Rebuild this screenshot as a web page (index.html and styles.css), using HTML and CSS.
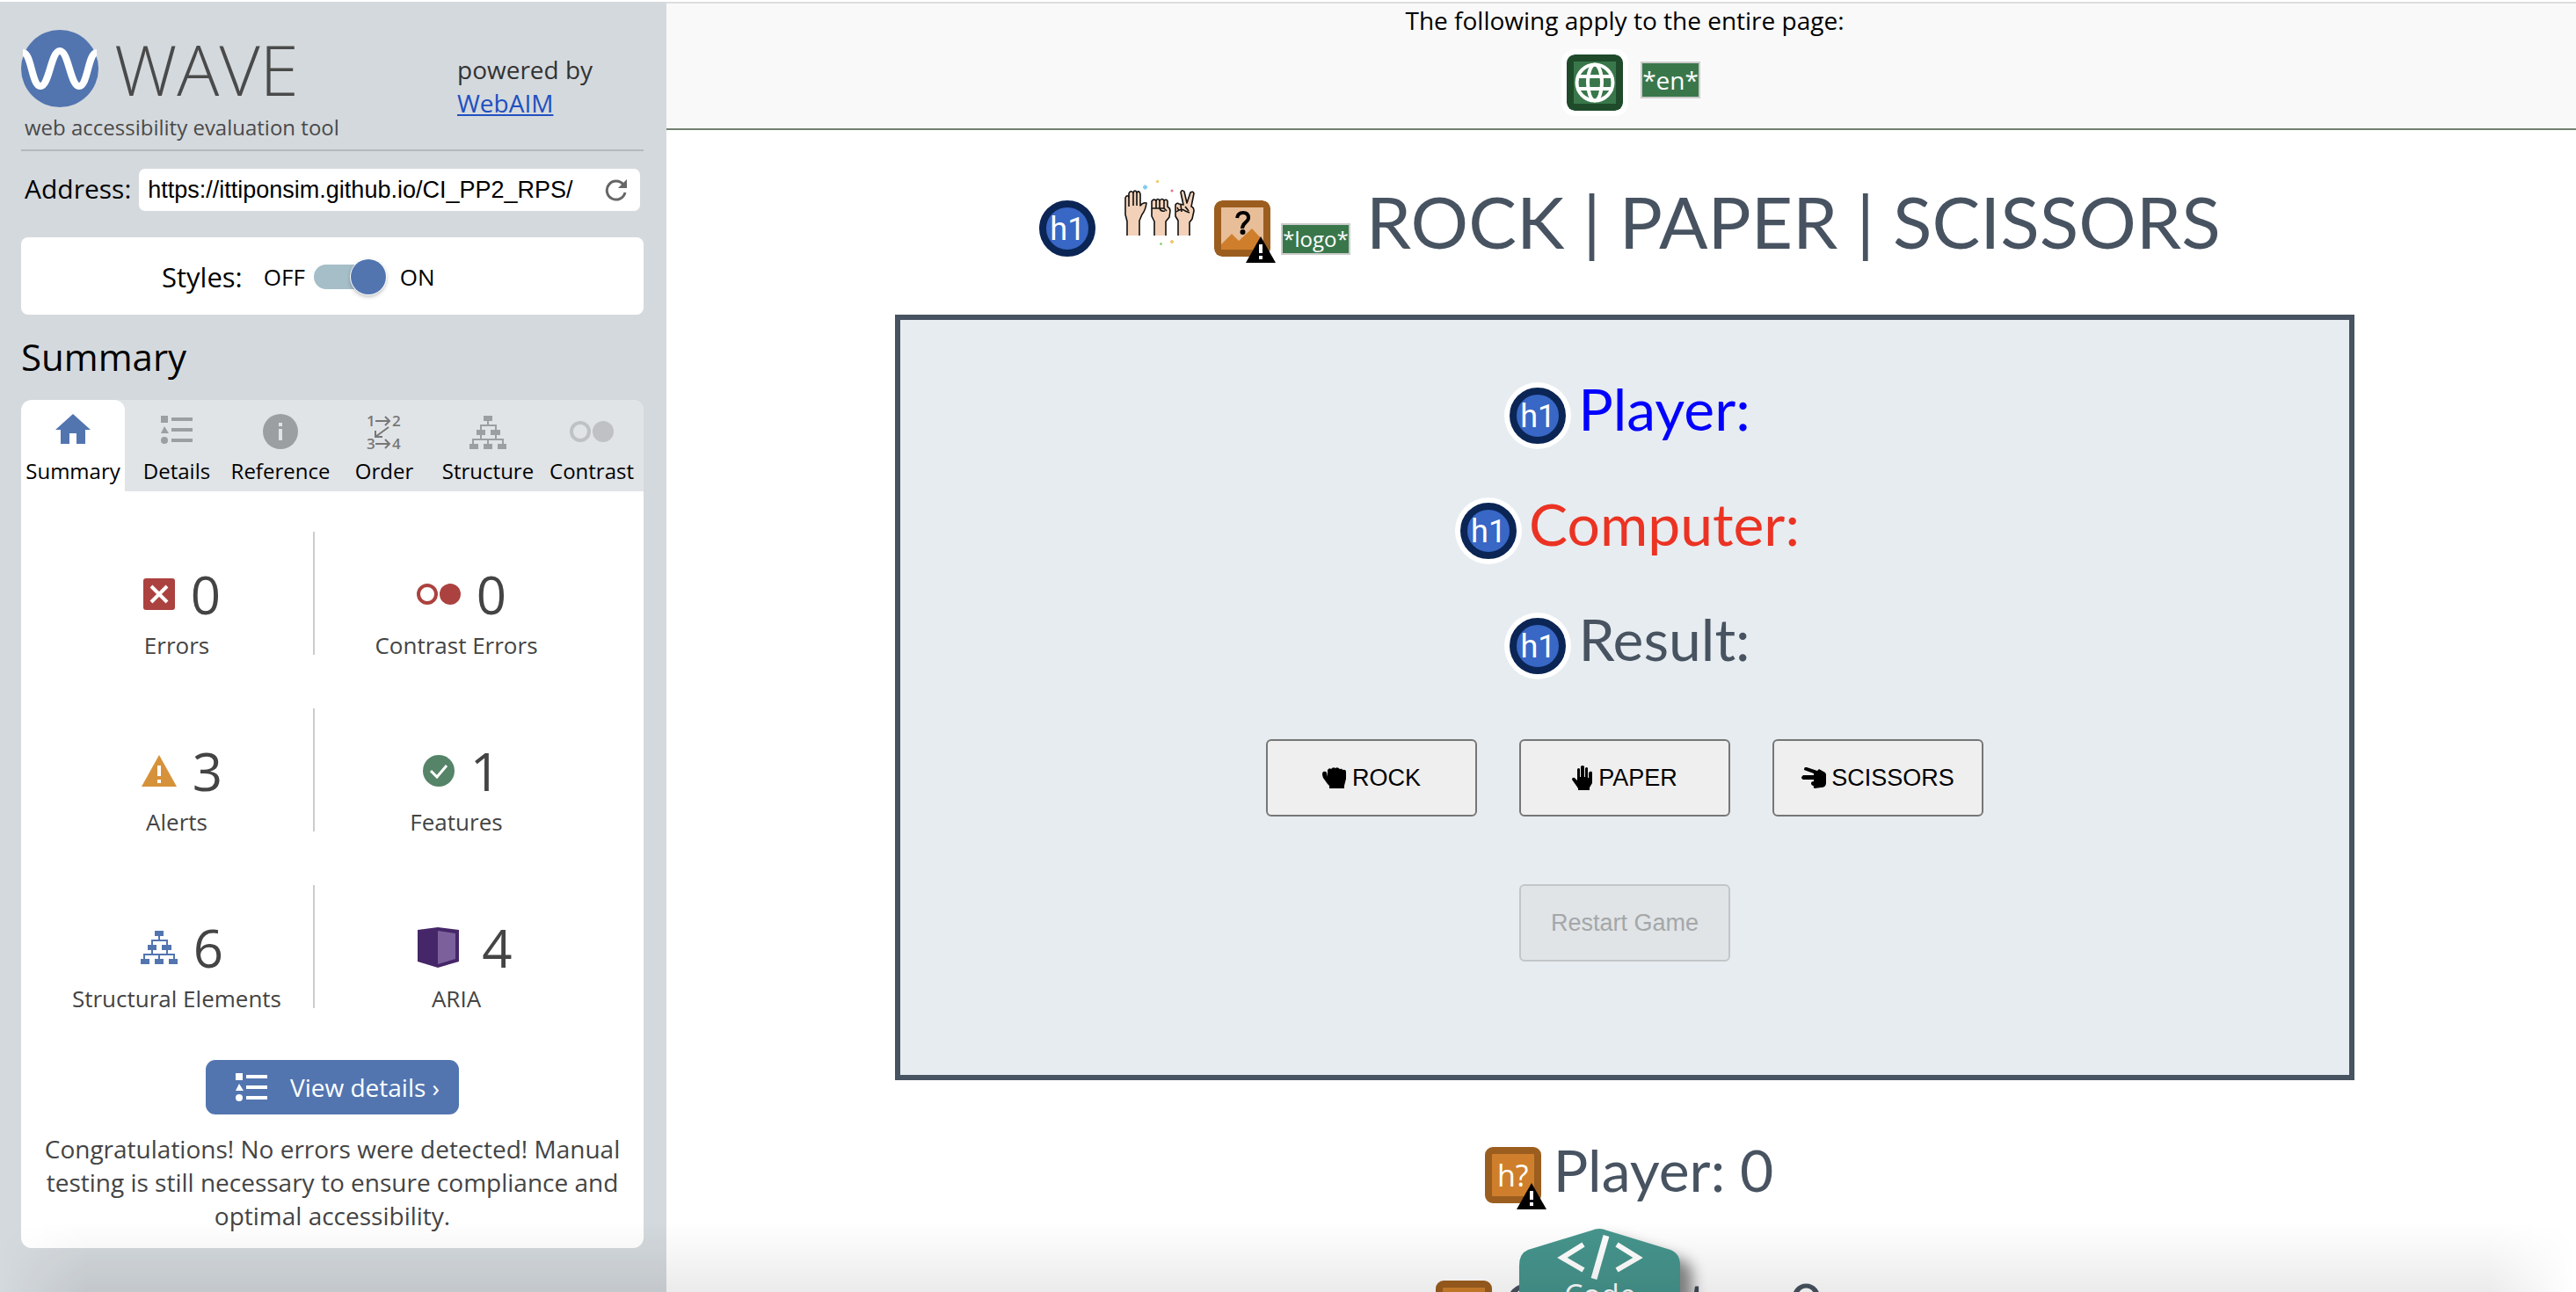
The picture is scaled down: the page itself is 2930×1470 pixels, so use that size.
FILE: index.html
```html
<!DOCTYPE html>
<html lang="en">
<head>
<meta charset="utf-8">
<title>WAVE Web Accessibility Evaluation Tool</title>
<link rel="stylesheet" href="styles.css">
</head>
<body>
<svg class="defs" width="0" height="0" aria-hidden="true">
  <symbol id="tree" viewBox="0 0 42 38">
    <path d="M16 0h10v6h-4v4h9v6h4v6h-4v4h8v6h3v6H32v-6h5v-4H22v4h4v6H16v-6h4v-4H5v4h5v6H0v-6h3v-6h9v-4H8v-6h4v-6h8V6h-4zM14 12v4h4v6h-4v4h15v-4h-5v-6h5v-4z" fill="currentColor" fill-rule="evenodd"/>
  </symbol>
  <symbol id="list" viewBox="0 0 36 32">
    <path d="M0 0h8v8H0zM12 2h24v4H12zM4 12l5 8h-9zM12 14h24v4H12zM12 26h24v4H12z" fill="currentColor"/>
    <circle cx="4" cy="28" r="4" fill="currentColor"/>
  </symbol>
  <symbol id="rings" viewBox="0 0 50 24">
    <circle cx="12" cy="12" r="10" fill="none" stroke="currentColor" stroke-width="4"/>
    <circle cx="38" cy="12" r="12" fill="currentColor"/>
  </symbol>
  <symbol id="warn" viewBox="0 0 34 30">
    <path d="M17 0l17 30H0z" fill="#000"/>
    <path d="M15 9h4v10h-4zM15 22h4v4h-4z" fill="#fff"/>
  </symbol>
</svg>
<div class="app">
  <aside class="sidebar">
    <header class="brand">
      <div class="logo">
        <div class="logo-row">
          <svg width="88" height="88" viewBox="0 0 88 88" aria-hidden="true">
            <circle cx="44" cy="44" r="44" fill="#5275b0"/>
            <path d="M2 26C12 26 12 64 22 64S34 24 44 24S56 64 66 64S76 26 86 26" fill="none" stroke="#fff" stroke-width="8"/>
          </svg>
          <span class="wordmark">WAVE</span>
        </div>
        <span class="tagline">web accessibility evaluation tool</span>
      </div>
      <p class="powered">powered by<br><a href="#">WebAIM</a></p>
    </header>
    <form class="address">
      <label for="url">Address:</label>
      <div class="url-box">
        <input id="url" type="text" value="https://ittiponsim.github.io/CI_PP2_RPS/">
        <button type="button" class="reload" aria-label="Reload">
          <svg width="26" height="26" viewBox="0 0 26 26"><path d="M21 7A10.500 10.500 0 1 0 23 16" fill="none" stroke="#666" stroke-width="3"/><path d="M25 1v10H15z" fill="#666"/></svg>
        </button>
      </div>
    </form>
    <div class="styles-card">
      <label class="styles-label" for="styles">Styles:</label>
      <span>OFF</span>
      <input id="styles" class="switch" type="checkbox" checked>
      <span>ON</span>
    </div>
    <h2>Summary</h2>
    <section class="panel">
      <nav class="tabs">
        <button class="tab active"><svg class="home" width="40" height="34" viewBox="0 0 40 34"><path d="M20 0l20 18h-6v16H24V22h-8v12H6V18H0z" fill="currentColor"/></svg>Summary</button>
        <button class="tab"><svg width="36" height="38" viewBox="0 0 36 38"><use href="#list" width="36" height="32"/></svg>Details</button>
        <button class="tab"><svg width="40" height="40" viewBox="0 0 40 40"><circle cx="20" cy="20" r="20" fill="currentColor"/><path d="M18 10h4v4h-4zM18 17h4v13h-4z" fill="#e0e4e7"/></svg>Reference</button>
        <button class="tab order"><svg width="38" height="38" viewBox="0 0 38 38"><g class="digits" fill="currentColor"><text x="-1" y="12">1</text><text x="28" y="12">2</text><text x="-1" y="38">3</text><text x="28" y="38">4</text></g><path d="M9 6h16M20 1l5 5-5 5M9 32h16M20 27l5 5-5 5M24 13L9 24M9 17v7h8" fill="none" stroke="currentColor" stroke-width="2"/></svg>Order</button>
        <button class="tab"><svg width="42" height="38"><use href="#tree"/></svg>Structure</button>
        <button class="tab contrast"><svg width="50" height="40"><use href="#rings" y="8" width="50" height="24"/></svg>Contrast</button>
      </nav>
      <ul class="stats">
        <li><div class="stat"><svg class="error" width="36" height="36" viewBox="0 0 36 36"><rect width="36" height="36" rx="3" fill="#ab423f"/><path d="M9 9l18 18M27 9L9 27" stroke="#fff" stroke-width="4"/></svg><b>0</b></div><span>Errors</span></li>
        <li><div class="stat rings"><svg width="50" height="24"><use href="#rings"/></svg><b>0</b></div><span>Contrast Errors</span></li>
        <li><div class="stat"><svg width="40" height="36" viewBox="0 0 40 36"><path d="M20 0l20 36H0z" fill="#d6923a"/><path d="M18 12h4v12h-4zM18 28h4v4h-4z" fill="#fff"/></svg><b>3</b></div><span>Alerts</span></li>
        <li><div class="stat"><svg width="36" height="36" viewBox="0 0 36 36"><circle cx="18" cy="18" r="18" fill="#558468"/><path d="M9 18l7 7 11-13" fill="none" stroke="#fff" stroke-width="3"/></svg><b>1</b></div><span>Features</span></li>
        <li><div class="stat tree"><svg width="42" height="38"><use href="#tree"/></svg><b>6</b></div><span>Structural Elements</span></li>
        <li><div class="stat aria"><svg width="47" height="46" viewBox="0 0 47 46"><path d="M23 0l24 3v36L23 46 0 39V3z" fill="#452668"/><path d="M23 4l20 3v29l-20 6z" fill="#7c609c"/></svg><b>4</b></div><span>ARIA</span></li>
      </ul>
      <div class="panel-foot">
        <button class="details"><svg width="36" height="32"><use href="#list"/></svg>View details ›</button>
        <p>Congratulations! No errors were detected! Manual testing is still necessary to ensure compliance and optimal accessibility.</p>
      </div>
    </section>
  </aside>
  <main class="page">
    <header class="page-info">
      <p>The following apply to the entire page:</p>
      <div class="page-icons">
        <svg class="badge square" width="64" height="64" viewBox="0 0 64 64" role="img" aria-label="Language"><rect width="64" height="64" rx="9" fill="#1f4b2b"/><rect x="8" y="8" width="48" height="48" fill="#39774b"/><g fill="none" stroke="#fff" stroke-width="4"><circle cx="32" cy="32" r="20.500"/><ellipse cx="32" cy="32" rx="8" ry="20.500"/><path d="M14 25h36M14 39h36"/></g></svg>
        <span class="note">*en*</span>
      </div>
    </header>
    <h1 class="title">
      <span class="badge h1">h1</span>
      <svg class="hands" width="80" height="76" viewBox="0 0 80 76" role="img" aria-label="Hands">
        <g fill="#f2d1b8" stroke="#111" stroke-width="1.600" stroke-linejoin="round">
          <path d="M3 63V47L1 39V20q2-4 4-1V15q2-4 5-1q2-4 4 0q3-3 4 2v13q3-4 7-3q-1 8-5 13l-3 7v17"/>
          <path d="M34 63V47l-3-6V24q2-3 5-1q2-3 4 0q3-3 5 0q3-2 4 1v6q3 2 3 5l-1 7-4 5v16"/>
          <path d="M61 63V46l-3-5V28q2-3 4-1l5 1-3-14q1-4 4-1l3 13 4-12q3-2 4 1l-3 15q3 1 3 5l-2 9-3 4v15"/>
          <path d="M5 19v11M10 14v15M14 14v15M36 23v9M40 23v9M45 23v9M31 32h14l3 3M40 32q1 4 6 3M60 31l2 4M64 28l1 8M59 36q6-5 10-1l5 2M69 30l4 5" fill="none"/>
        </g>
        <path d="M21 8h5M23.500 5.500v5" stroke="#7ecbf2" stroke-width="2.500"/><path d="M36 1.500h3M37.500 0v3M52 70h4M54 68v4" stroke="#f2c968" stroke-width="2"/><circle cx="54" cy="12" r="1.500" fill="#e9708a"/><path d="M40 72.500h3M41.500 71v3" stroke="#95d07c" stroke-width="1.500"/>
      </svg>
      <span class="badge-wrap"><svg class="badge square" width="64" height="64" viewBox="0 0 64 64" role="img" aria-label="Suspicious alternative text"><rect width="64" height="64" rx="9" fill="#9c5e1f"/><rect x="8" y="8" width="48" height="48" fill="#e8be99"/><path d="M8 50l12-12 8 8 15-14 13 14v10H8z" fill="#cf7f2c"/><path d="M26 20q1-6 7-6 6 0 6 6c0 5-7 5-7 12" fill="none" stroke="#000" stroke-width="4"/><circle cx="32.500" cy="36" r="3"/></svg><svg class="warn" width="34" height="30"><use href="#warn"/></svg></span>
      <span class="note">*logo*</span>
      <span class="title-text">ROCK | PAPER | SCISSORS</span>
    </h1>
    <section class="game">
      <h1 class="line player"><span class="badge h1">h1</span>Player:</h1>
      <h1 class="line computer"><span class="badge h1">h1</span>Computer:</h1>
      <h1 class="line"><span class="badge h1">h1</span>Result:</h1>
      <div class="choices">
        <button><svg width="28" height="24" viewBox="0 0 28 24"><path d="M6 19L1 12Q-1 7 1 5q3-1 4 1l1 5V3q2-3 4-1q2-3 5-1q2-2 5 1q3-1 3 1q4-1 4 2v8l-2 8v3H8v-3z"/></svg>ROCK</button>
        <button><svg width="24" height="28" viewBox="0 0 24 28"><path d="M5 23L0 16q0-3 3-2l3 3V4q2-2 3 0v9h1V1q2-2 4 0v12h1V3q2-2 3 0v11h1V8q3-3 4 0v12l-3 5v3H7v-2z"/></svg>PAPER</button>
        <button><svg width="28" height="24" viewBox="0 0 28 24"><path d="M14 7L3 3Q3-1 6 0l12 4 2-2 7 4 1 2v10q0 5-6 5l-7 1q-2-1-1-3-3 0-3-3 0-2 3-2v-2H2q-4-2 0-5h12z"/></svg>SCISSORS</button>
      </div>
      <button class="restart" disabled>Restart Game</button>
    </section>
    <section class="scores">
      <p><span class="badge-wrap"><span class="badge hq">h?</span><svg class="warn" width="34" height="30"><use href="#warn"/></svg></span>Player: 0</p>
      <p><span class="badge-wrap"><span class="badge hq">h?</span><svg class="warn" width="34" height="30"><use href="#warn"/></svg></span>Computer: 0</p>
    </section>
  </main>
</div>
<button class="code"><svg width="184" height="212" viewBox="0 0 184 212"><path d="M82 2q9-4 18 0l72 22q11 4 11 18v128q0 14-11 18l-72 22q-9 4-18 0l-72-22Q0 184 0 170V42q0-14 10-18z" fill="#46958d"/><path d="M73 18L49 33l24 14M111 18l24 15-24 14" fill="none" stroke="#fff" stroke-width="6"/><path d="M99 8L85 57" stroke="#fff" stroke-width="7"/></svg><span>Code</span></button>
<div class="shade"></div>
</body>
</html>
```
FILE: styles.css
```css
* { box-sizing: border-box; }
html, body { height: 100%; margin: 0; }
body {
  font-family: "Open Sans", "Noto Sans", sans-serif;
  font-size: 26px;
  color: #000;
  background: #fff;
  overflow: hidden;
  position: relative;
}
button, input { font: inherit; color: inherit; margin: 0; }
p, h1, h2, ul { margin: 0; padding: 0; }
svg { display: block; flex: none; }
.defs { position: absolute; }

.app {
  display: grid;
  grid-template-columns: 758px 1fr;
  height: 100%;
  border-top: 2px solid #fff;
}
.sidebar {
  background: #d4d9dd;
  padding: 32px 26px 0 24px;
  overflow: hidden;
}
.brand {
  display: flex;
  justify-content: space-between;
  height: 138px;
  border-bottom: 2px solid #b3b9bd;
}
.logo-row { display: flex; align-items: center; gap: 18px; height: 88px; }
.wordmark { font-size: 80px; font-weight: 300; color: #4a4a4a; line-height: 90px; }
.tagline { display: block; margin: 6px 0 0 4px; font-size: 24px; line-height: 34px; color: #4a4a4a; }
.powered { width: 212px; margin-top: 26px; font-size: 28px; line-height: 38px; color: #333; }
.powered a { color: #2150c0; }

.address { display: flex; align-items: center; gap: 9px; height: 48px; margin: 20px 4px 0; }
.address label { font-size: 30px; padding-bottom: 4px; }
.url-box { display: flex; flex: 1; align-items: center; height: 48px; background: #fff; border-radius: 7px; padding: 0 14px 0 10px; }
.url-box input { flex: 1; min-width: 0; border: 0; padding: 0; background: none; font: 27px "Liberation Sans", Arial, sans-serif; }
.reload { border: 0; padding: 0; background: none; }

.styles-card { display: flex; align-items: center; height: 88px; margin-top: 30px; padding: 2px 0 0 160px; background: #fff; border-radius: 8px; }
.styles-label { font-size: 31px; margin-right: 24px; }
.switch { appearance: none; position: relative; width: 82px; height: 28px; margin: 0 16px 0 10px; border-radius: 14px; background: #a5bec8; }
.switch::after { content: ""; position: absolute; right: 0; top: -6px; width: 40px; height: 40px; border-radius: 50%; background: #5275b0; box-shadow: 0 0 0 1px #fff, 0 2px 5px #0005; }

h2 { margin-top: 16px; font-size: 42px; font-weight: 400; line-height: 64px; }
.panel { margin-top: 17px; background: #fff; border-radius: 12px; overflow: hidden; }
.tabs { display: grid; grid-template-columns: repeat(6, 1fr); height: 104px; background: #e0e4e7; }
.tab { display: flex; flex-direction: column; align-items: center; justify-content: flex-end; border: 0; padding: 0 0 6px; background: none; font-size: 24px; line-height: 34px; white-space: nowrap; }
.tab svg { margin-bottom: 8px; color: #9c9fa1; }
.tab.active { background: #fff; border-radius: 12px 12px 0 0; }
.tab.active svg { color: #5275b0; margin-bottom: 14px; }
.tab.order svg { color: #777; overflow: visible; }
.tab.contrast svg { color: #bfc1c4; }
.digits { font-size: 17px; font-weight: 600; }

.stats { display: grid; grid-template-columns: 334px 306px; grid-auto-rows: 140px; row-gap: 61px; list-style: none; margin-top: 46px; }
.stats li { display: flex; flex-direction: column; align-items: center; justify-content: flex-end; color: #444; line-height: 22px; }
.stats li:nth-child(odd) { border-right: 2px solid #ccc; padding-left: 22px; }
.stats li:nth-child(even) { padding-left: 16px; }
.stat { display: flex; align-items: center; gap: 18px; height: 74px; margin-bottom: 10px; padding-left: 12px; }
.stat b { font-size: 60px; font-weight: 400; line-height: 74px; }
.stat.rings svg { color: #ab423f; }
.stat.tree svg { color: #5275b0; }
.stat.aria { gap: 26px; padding-left: 20px; }

.panel-foot { padding: 59px 24px 18px; text-align: center; color: #444; }
.details { display: inline-flex; align-items: center; gap: 26px; height: 62px; border: 0; border-radius: 11px; padding: 0 22px 0 34px; background: #5275b0; color: #fff; font-size: 28px; }
.panel-foot p { margin-top: 20px; font-size: 28px; line-height: 38px; }

.page { display: flex; flex-direction: column; align-items: center; border-top: 2px solid #ddd; min-width: 0; overflow: hidden; color: #485361; }
.page-info { flex: none; align-self: stretch; height: 144px; padding-left: 8px; background: #f9f9f9; border-bottom: 2px solid #738070; text-align: center; color: #000; }
.page-info p { font-size: 28px; line-height: 38px; }
.page-icons { display: flex; justify-content: center; align-items: flex-start; gap: 20px; padding: 20px 0 0 20px; }
.badge { display: block; flex: none; width: 64px; height: 64px; text-align: center; color: #fff; font: 400 34px/48px "Open Sans", sans-serif; box-shadow: 0 0 0 6px #fff; }
.badge.square, .badge.hq { border-radius: 9px; }
.badge.h1 { border-radius: 50%; border: 8px solid #0b2555; background: #3867c5; font: 400 36px/50px Roboto, "Open Sans", sans-serif; }
.badge.hq { border: 8px solid #9c5e1f; background: #cf7f2c; }
.badge-wrap { position: relative; flex: none; }
.warn { position: absolute; left: 36px; top: 41px; }
.note { background: #39774b; color: #fff; border: 2px solid #ccc; font: 400 28px/38px "Open Sans", sans-serif; }
.page-icons .note { margin-top: 8px; }

.title, .line, .scores p { font-family: Lato, "Open Sans", sans-serif; font-weight: 400; display: flex; justify-content: center; white-space: nowrap; flex: none; }
.title { height: 102px; margin: 52px 0 0 20px; align-items: center; }
.title > .badge, .title > .badge-wrap { margin-top: 18px; }
.title .hands { margin: 0 22px 16px 33px; }
.title .note { margin: 42px 0 0 12px; line-height: 32px; font-size: 24px; }
.title-text { margin-left: 18px; font-size: 82px; line-height: 102px; }

.game { display: flex; flex-direction: column; align-items: center; width: 90%; max-width: 1660px; height: 871px; margin: 56px 0 0 8px; padding-top: 39px; border: 6px solid #485361; background: #e7ecf0; flex: none; }
.line { align-items: center; gap: 14px; height: 131px; font-size: 66px; line-height: 80px; padding: 0 0 8px 12px; }
.line .badge { margin-top: 16px; }
.line.player { color: #00f; }
.line.computer { color: #eb3323; }
.choices { display: flex; gap: 48px; margin-top: 45px; }
.game button { display: flex; align-items: center; justify-content: center; gap: 6px; width: 240px; height: 88px; padding: 0; border: 2px solid #767676; border-radius: 6px; background: #efefef; color: #000; font: 27px "Liberation Sans", Arial, sans-serif; }
.game .restart { margin-top: 77px; color: #a4a7a8; background: #e0e4e7; border-color: #c3c6c8; }
.scores { margin: 26px 0 0 18px; }
.scores p { align-items: center; gap: 14px; height: 152px; font-size: 66px; line-height: 80px; }
.scores .badge-wrap { margin-top: 12px; }

.code { position: absolute; left: 1728px; top: 1398px; padding: 0; border: 0; background: none; color: #fff; font-size: 34px; }
.code svg { filter: drop-shadow(14px 12px 8px #0007); }
.code span { position: absolute; left: 0; right: 0; top: 52px; line-height: 46px; }
.shade { position: absolute; left: 0; right: 0; bottom: 0; height: 80px; background: linear-gradient(#0000, #00000014); pointer-events: none; mask-image: linear-gradient(90deg, #0000, #000 100px, #000 calc(100% - 100px), #0000); }
```
